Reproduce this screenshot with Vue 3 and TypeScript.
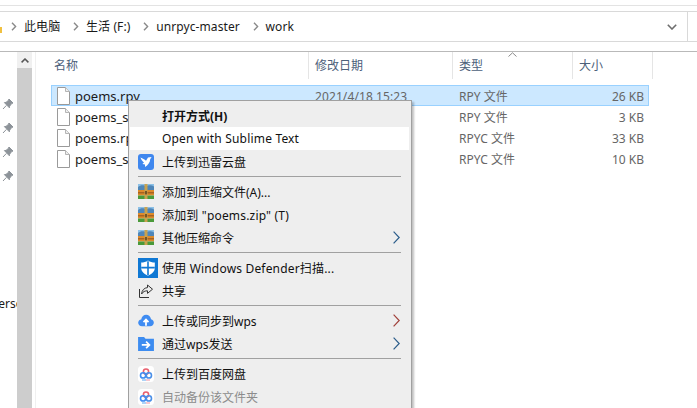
<script setup lang="ts">
const crumbs = ['此电脑', '生活 (F:)', 'unrpyc-master', 'work']
const pins = [0, 1, 2, 3]
const columns = ['名称', '修改日期', '类型', '大小']
const files = [
  { name: 'poems.rpy', date: '2021/4/18 15:23', type: 'RPY 文件', size: '26 KB', selected: true },
  { name: 'poems_s', date: '', type: 'RPY 文件', size: '3 KB', selected: false },
  { name: 'poems.rp', date: '', type: 'RPYC 文件', size: '33 KB', selected: false },
  { name: 'poems_s', date: '', type: 'RPYC 文件', size: '10 KB', selected: false },
]
type Item = { label?: string; icon?: string; arrow?: string; cls?: string }
const menu: Item[] = [
  { label: '打开方式(H)', cls: 'bold' },
  { label: 'Open with Sublime Text', cls: 'hover wide' },
  { label: '上传到迅雷云盘', icon: 'xunlei' },
  {},
  { label: '添加到压缩文件(A)...', icon: 'rar' },
  { label: '添加到 "poems.zip" (T)', icon: 'rar', cls: 'wide' },
  { label: '其他压缩命令', icon: 'rar', arrow: '#2a5c8a' },
  {},
  { label: '使用 Windows Defender扫描...', icon: 'defender', cls: 'wide' },
  { label: '共享', icon: 'share' },
  {},
  { label: '上传或同步到wps', icon: 'cloud', arrow: '#a0403a' },
  { label: '通过wps发送', icon: 'send', arrow: '#2a5c8a' },
  {},
  { label: '上传到百度网盘', icon: 'baidu' },
  { label: '自动备份该文件夹', icon: 'baidu', cls: 'muted' },
]
</script>

<template>
  <div class="window">
    <div class="topline"></div>
    <div class="address">
      <i class="folder-bit"></i>
      <div class="crumbs">
        <template v-for="c in crumbs" :key="c">
          <svg class="sep-chev" width="6" height="9" viewBox="0 0 6 9"><path d="M1 .8 4.6 4.5 1 8.2" fill="none" stroke="#8a8a8a" stroke-width="1.4" /></svg>
          <span class="crumb">{{ c }}</span>
        </template>
      </div>
      <svg class="drop" width="10" height="6" viewBox="0 0 10 6"><path d="M.8.8 5 5 9.2.8" fill="none" stroke="#6e6e6e" stroke-width="1.6" /></svg>
      <div class="drop-cell"></div>
    </div>
    <div class="main">
      <aside class="side">
        <div class="pins">
          <svg v-for="p in pins" :key="p" class="pin" width="12" height="12" viewBox="0 0 12 12"><path d="M7 1 11 5 9.6 5.6 7.6 8.2 7.4 9.8 2.4 4.6 4 4.4 6.4 2.4ZM4.4 7.4 1 11" fill="#8d9399" stroke="#8d9399" stroke-width="1" /></svg>
        </div>
        <div class="side-label">Personal</div>
      </aside>
      <div class="scroll">
        <div class="scroll-up"><svg width="8" height="5" viewBox="0 0 8 5"><path d="M.6 4.4 4 1 7.4 4.4" fill="none" stroke="#555" stroke-width="1.5" /></svg></div>
      </div>
      <section class="list">
        <div class="head">
          <div v-for="c in columns" :key="c" class="col">{{ c }}</div>
          <svg class="caret" width="9" height="5" viewBox="0 0 9 5"><path d="M.5 4.5 4.5.8 8.5 4.5" fill="none" stroke="#8a8a8a" /></svg>
        </div>
        <div class="rows">
          <div v-for="f in files" :key="f.type + f.size" class="row" :class="{ selected: f.selected }">
            <div class="name">
              <svg width="13" height="18" viewBox="0 0 13 18"><path d="M.5.5H8.5L12.5 4.5V17.5H.5Z" fill="#fff" stroke="#9a9a9a" /><path d="M8.5.5V4.5H12.5" fill="#eee" stroke="#b5b5b5" /></svg>
              <span>{{ f.name }}</span>
            </div>
            <div class="date">{{ f.date }}</div>
            <div class="type">{{ f.type }}</div>
            <div class="size">{{ f.size }}</div>
          </div>
        </div>
      </section>
    </div>

    <div class="menu">
      <template v-for="(m, i) in menu" :key="i">
        <div v-if="!m.label" class="divider"></div>
        <div v-else class="item" :class="m.cls">
          <span class="ico">
            <svg v-if="m.icon === 'xunlei'" width="16" height="16" viewBox="0 0 16 16"><rect width="16" height="16" rx="3" fill="#3f87ee" /><path d="M2.5 3.6C4.6 4.6 6.6 5.6 8 6.8L10 3.4 13.6 3 12.2 5.2C12.2 8.4 10 11 7 12.9V10.5L4.4 10 6 8.5C4.4 7.4 3 5.8 2.5 3.6Z" fill="#fff" /></svg>
            <svg v-else-if="m.icon === 'rar'" width="16" height="15" viewBox="0 0 16 15"><rect width="16" height="6" fill="#4f86b8" /><path d="M0 3C3 .6 6 1 8 2.6 10.6.6 13.6.8 16 2.4V0H0Z" fill="#8cc0e6" /><rect y="6" width="16" height="5.5" fill="#dd8a2a" /><rect y="8.2" width="16" height="1.2" fill="#9a5a20" /><rect y="11.5" width="16" height="3.5" fill="#4a9a3a" /><rect x="6.5" width="3" height="15" fill="#c9a24e" /><rect x="7.2" y="7" width="1.6" height="3.4" fill="#5f431c" /></svg>
            <svg v-else-if="m.icon === 'defender'" width="20" height="20" viewBox="0 0 20 20"><rect width="20" height="20" fill="#0f78d4" /><path d="M10 2.4C12 3.8 14.4 4.4 16.8 4.4V10C16.8 13.4 13.8 16 10 17.8 6.2 16 3.2 13.4 3.2 10V4.4C5.6 4.4 8 3.8 10 2.4Z" fill="#fff" /><path d="M9.2 3.3H10.8V17.2H9.2ZM3.2 8.8H16.8V10.4H3.2Z" fill="#0f78d4" /></svg>
            <svg v-else-if="m.icon === 'share'" width="16" height="14" viewBox="0 0 16 14"><path d="M1.5 5V13.5H11M9.5 1 14.5 5.2 9.5 9.4V6.8C7 6.8 5 7.6 3.6 10 3.8 6.4 6.2 3.8 9.5 3.6Z" fill="none" stroke="#333" stroke-width="1" /></svg>
            <svg v-else-if="m.icon === 'cloud'" width="16" height="13" viewBox="0 0 18 14"><path d="M4.5 13.5C2 13.5 .2 11.8.2 9.6.2 7.6 1.6 6 3.6 5.8 4.2 2.6 6.4.6 9.2.6 12 .6 14.2 2.6 14.7 5.6 16.6 6 17.8 7.6 17.8 9.6 17.8 11.8 16 13.5 13.6 13.5Z" fill="#3f8cf2" /><path d="M9 13V6.6M6.2 8.8 9 6 11.8 8.8" fill="none" stroke="#fff" stroke-width="2" /></svg>
            <svg v-else-if="m.icon === 'send'" width="16" height="14" viewBox="0 0 17 15"><path d="M0 0H6.4L8 2H17V15H0Z" fill="#3d8cf0" /><path d="M4 8.5H12M8.6 5 12.2 8.5 8.6 12" fill="none" stroke="#fff" stroke-width="1.8" /></svg>
            <svg v-else-if="m.icon === 'baidu'" width="16" height="16" viewBox="0 0 16 16"><rect width="16" height="16" rx="3.5" fill="#fff" /><circle cx="8" cy="5.6" r="2.6" fill="none" stroke="#e9606f" stroke-width="1.6" /><circle cx="5.1" cy="9.4" r="2.6" fill="none" stroke="#3f8cf2" stroke-width="1.6" /><circle cx="10.9" cy="9.4" r="2.6" fill="none" stroke="#4a8fe8" stroke-width="1.6" /><path d="M4 14H8" stroke="#5aa8ee" /><path d="M8 14H12" stroke="#ee8fa0" /></svg>
          </span>
          <span class="label">{{ m.label }}</span>
          <svg v-if="m.arrow" class="arrow" width="7" height="13" viewBox="0 0 7 13"><path d="M.6.6 6.2 6.5 .6 12.4" fill="none" :stroke="m.arrow" stroke-width="1.2" /></svg>
        </div>
      </template>
    </div>
  </div>
</template>

<style>
html, body { margin: 0; background: #fff; overflow: hidden; }
</style>

<style scoped>
.window {
  position: relative;
  width: 697px;
  height: 408px;
  overflow: hidden;
  background: #fff;
  font: 12px "Noto Sans", "Noto Sans CJK SC", sans-serif;
  color: #1a1a1a;
}
.topline { height: 1px; margin-top: 5px; background: #e3e3e3; }
.address {
  position: relative;
  height: 29px;
  margin-top: 5px;
  border-top: 1px solid #d9d9d9;
  border-bottom: 1px solid #d9d9d9;
  display: flex;
  align-items: center;
}
.folder-bit { position: absolute; left: 0; top: 15px; width: 2px; height: 6px; background: #f0c040; }
.crumbs { display: flex; align-items: center; padding-left: 11px; flex: 1; }
.sep-chev { margin-right: 7px; flex: none; }
.crumb { margin-right: 12.7px; line-height: 16px; letter-spacing: .1px; }
.drop { margin-right: 10px; margin-top: 1px; }
.drop-cell { width: 9px; height: 29px; border-left: 1px solid #d9d9d9; }
.main {
  display: flex;
  height: 356px;
  margin-top: 9px;
  border-top: 1px solid #b9b9b9;
}
.side { width: 17px; overflow: hidden; position: relative; flex: none; }
.pins { display: flex; flex-direction: column; gap: 12px; padding: 46px 0 0 2px; }
.pin { display: block; }
.side-label { position: absolute; left: -9px; top: 243px; white-space: nowrap; width: 26px; overflow: hidden; color: #1a1a1a; }
.scroll { width: 15px; flex: none; background: #cdcdcd; }
.scroll-up { height: 16px; background: #f0f0f0; display: flex; justify-content: center; align-items: center; }
.list { flex: 1; margin-left: 3px; border-left: 1px solid #f0f0f0; padding-left: 15px; min-width: 0; }
.head {
  position: relative;
  display: grid;
  grid-template-columns: 258px 144px 120px 80px;
  width: 602px;
  height: 27px;
}
.col {
  line-height: 27px;
  padding-left: 6px;
  color: #4c607a;
  border-right: 1px solid #e5e5e5;
}
.col:first-child { padding-left: 3px; }
.caret { position: absolute; left: 457px; top: 0; }
.rows { margin-top: 6px; }
.row {
  display: grid;
  grid-template-columns: 257px 144px 120px 71px;
  height: 21px;
  width: 598px;
  box-sizing: border-box;
  align-items: center;
  border: 1px solid transparent;
  line-height: 19px;
  color: #666;
}
.row.selected { background: #cce8ff; border-color: #99d1ff; }
.name { display: flex; align-items: center; gap: 5px; padding-left: 5px; color: #1a1a1a; font-size: 13px; }
.name span { padding-top: 1px; }
.date, .type, .size { padding-top: 1px; }
.date { padding-left: 6px; letter-spacing: .1px; }
.type { padding-left: 6px; }
.size { text-align: right; }
.menu {
  position: absolute;
  left: 128px;
  top: 100px;
  width: 279px;
  height: 320px;
  padding: 3px 2px 0 1px;
  background: #eee;
  border: 1px solid #a0a0a0;
  box-shadow: 2px 2px 2px rgba(0, 0, 0, .25);
}
.item {
  position: relative;
  display: flex;
  align-items: center;
  height: 23px;
  color: #111;
}
.item.hover { background: #fff; }
.item.bold .label { font-weight: 700; }
.item.muted { color: #8c8c8c; }
.item.wide .label { letter-spacing: .18px; }
.ico { width: 24px; padding-left: 8px; flex: none; display: flex; }
.label { white-space: nowrap; }
.arrow { position: absolute; right: 9px; top: 5px; }
.divider { height: 1px; margin: 3px 8px; background: #a0a0a0; }
</style>
